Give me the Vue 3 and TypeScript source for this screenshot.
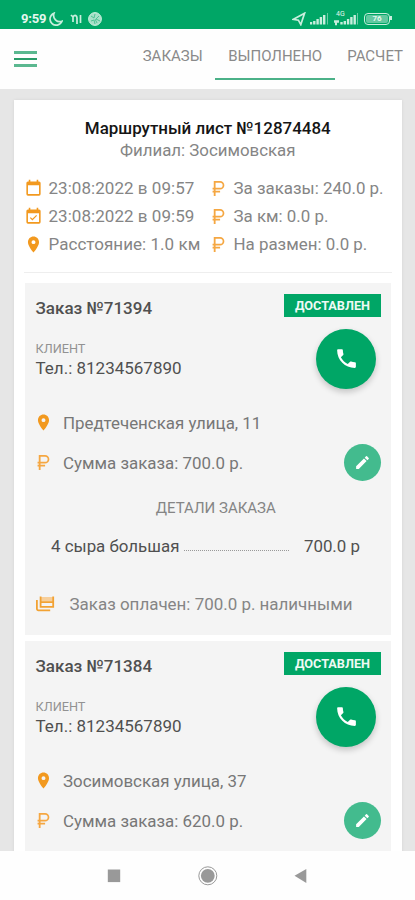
<script setup lang="ts">
interface Order {
  id: number
  phone: string
  address: string
  sum: string
  item?: { name: string; price: string }
  paid?: string
}

const tabs = [
  { key: 'orders', label: 'ЗАКАЗЫ', active: false },
  { key: 'done', label: 'ВЫПОЛНЕНО', active: true },
  { key: 'calc', label: 'РАСЧЕТ', active: false },
]

const summary = [
  { icon: 'calendar', text: '23:08:2022 в 09:57' },
  { icon: 'ruble', text: 'За заказы: 240.0 р.' },
  { icon: 'calendar-check', text: '23:08:2022 в 09:59' },
  { icon: 'ruble', text: 'За км: 0.0 р.' },
  { icon: 'pin', text: 'Расстояние: 1.0 км' },
  { icon: 'ruble', text: 'На размен: 0.0 р.' },
]

const orders: Order[] = [
  {
    id: 71394,
    phone: '81234567890',
    address: 'Предтеченская улица, 11',
    sum: '700.0 р.',
    item: { name: '4 сыра большая', price: '700.0 р' },
    paid: '700.0 р. наличными',
  },
  { id: 71384, phone: '81234567890', address: 'Зосимовская улица, 37', sum: '620.0 р.' },
]

const icons: Record<string, string> = {
  calendar: 'M19 3h-1V1h-2v2H8V1H6v2H5a2 2 0 0 0-2 2v14a2 2 0 0 0 2 2h14a2 2 0 0 0 2-2V5a2 2 0 0 0-2-2zm0 16H5V8h14z',
  'calendar-check':
    'M19 3h-1V1h-2v2H8V1H6v2H5a2 2 0 0 0-2 2v14a2 2 0 0 0 2 2h14a2 2 0 0 0 2-2V5a2 2 0 0 0-2-2zm0 16H5V8h14zM16.5 11.2l-1.1-1.1-4.8 4.8-2.1-2.1-1.1 1.1 3.2 3.2z',
  pin: 'M12 2C8.13 2 5 5.13 5 9c0 5.25 7 13 7 13s7-7.75 7-13c0-3.87-3.13-7-7-7zm0 9.5a2.5 2.5 0 0 1 0-5 2.5 2.5 0 0 1 0 5z',
  ruble: 'M6 2.5h8a5.4 5.4 0 0 1 0 10.8H8.3v1.6H14v2.1H8.3v4.5H6V17H4.5v-2.1H6v-1.6H4.5v-2.1H6zm2.3 2.2v6.5H14a3.25 3.25 0 0 0 0-6.5z',
  phone: 'M6.62 10.79c1.44 2.83 3.76 5.14 6.59 6.59l2.2-2.2c.27-.27.67-.36 1.02-.24 1.12.37 2.33.57 3.57.57.55 0 1 .45 1 1V20c0 .55-.45 1-1 1C10.61 21 3 13.39 3 4c0-.55.45-1 1-1h3.5c.55 0 1 .45 1 1 0 1.25.2 2.45.57 3.57.11.35.03.74-.25 1.02z',
  pencil: 'M3 17.25V21h3.75L17.81 9.94l-3.75-3.75zM20.71 7.04a1 1 0 0 0 0-1.41l-2.34-2.34a1 1 0 0 0-1.41 0l-1.83 1.83 3.75 3.75z',
}
</script>

<template>
  <div class="screen">
    <div class="status">
      <span class="clock">9:59</span>
      <svg class="moon" viewBox="0 0 14 14"><path d="M5 1.2A6.2 6.2 0 1 0 13 9.3 6.3 6.3 0 0 1 5 1.2z" /></svg>
      <svg class="wave" viewBox="0 0 12 12"><path d="M1 2l2 2v5M3 4c2-3 4-1 4 1v6M10.5 2v8" /></svg>
      <svg class="globe" viewBox="0 0 14 14"><circle cx="7" cy="7" r="6.4" /><path d="M3 4l3 2 1-4M11 4L8 7l4 2M3 9l3-1 1 4M7 7l2 4" /></svg>
      <span class="grow"></span>
      <svg class="nav-arrow" viewBox="0 0 14 14"><path d="M1 7.4L12.6 1.2 8.8 12.6 6.4 8.2z" /></svg>
      <svg class="signal" viewBox="0 0 19 14"><path d="M1 12.5v-2.5M4.3 12.5V9M7.6 12.5V7M10.9 12.5V5M14.2 12.5V3" /><path class="dim" d="M17.5 12.5V1" /></svg>
      <span class="cell">
        <span class="net">4G</span>
        <svg class="signal2" viewBox="0 0 24 14"><path d="M0 9.5h5M1 12h2M7.5 12.5V10M10.8 12.5V9M14.1 12.5V7M17.4 12.5V5M20.7 12.5V3" /><path class="dim" d="M23.5 12.5V1" /></svg>
      </span>
      <span class="battery"><span class="level">76</span></span>
    </div>

    <header class="bar">
      <button class="menu" aria-label="Меню"><i></i><i></i><i></i></button>
      <nav class="tabs">
        <a v-for="t in tabs" :key="t.key" :class="['tab', t.key, { active: t.active }]">{{ t.label }}</a>
      </nav>
    </header>

    <main class="content">
      <section class="sheet">
        <h1>Маршрутный лист №12874484</h1>
        <p class="branch">Филиал: Зосимовская</p>
        <div class="summary">
          <div v-for="(s, i) in summary" :key="i" class="fact">
            <svg :class="['ico', s.icon]" viewBox="0 0 24 24"><path :d="icons[s.icon]" /></svg>
            <span>{{ s.text }}</span>
          </div>
        </div>
        <hr />
        <article v-for="o in orders" :key="o.id" class="order">
          <div class="head">
            <h2>Заказ №{{ o.id }}</h2>
            <span class="badge">ДОСТАВЛЕН</span>
          </div>
          <div class="client">
            <div>
              <p class="label">КЛИЕНТ</p>
              <p class="tel">Тел.: {{ o.phone }}</p>
            </div>
            <button class="call" aria-label="Позвонить"><svg viewBox="0 0 24 24"><path :d="icons.phone" /></svg></button>
          </div>
          <div class="line address">
            <svg class="ico pin" viewBox="0 0 24 24"><path :d="icons.pin" /></svg>
            <span>{{ o.address }}</span>
          </div>
          <div class="line sum">
            <svg class="ico ruble" viewBox="0 0 24 24"><path :d="icons.ruble" /></svg>
            <span>Сумма заказа: {{ o.sum }}</span>
            <button class="edit" aria-label="Изменить"><svg viewBox="0 0 24 24"><path :d="icons.pencil" /></svg></button>
          </div>
          <template v-if="o.item">
            <p class="details">ДЕТАЛИ ЗАКАЗА</p>
            <div class="item">
              <span class="name">{{ o.item.name }}</span>
              <span class="dots"></span>
              <span class="price">{{ o.item.price }}</span>
            </div>
            <div class="paid">
              <svg class="cards" viewBox="0 0 19 16">
                <path class="tint" d="M5 1h12v4.5H5z" />
                <path class="stroke" d="M4.6 .5v10.3h12.6V.5M4.6 6.2h12.6M.9 4v8.8a1.5 1.5 0 0 0 1.5 1.5h11.8" />
              </svg>
              <span>Заказ оплачен: {{ o.paid }}</span>
            </div>
          </template>
        </article>
      </section>
    </main>

    <footer class="system">
      <svg viewBox="0 0 415 49">
        <rect x="107.8" y="18.5" width="12.4" height="12.6" />
        <circle class="ring" cx="207.8" cy="24.8" r="9" />
        <circle cx="207.8" cy="24.8" r="6.9" />
        <path d="M306.3 18v14L294.5 24.8z" />
      </svg>
    </footer>
  </div>
</template>

<style>
body {
  margin: 0;
  background: #fff;
  overflow: hidden;
}
</style>

<style scoped>
.screen {
  width: 415px;
  height: 900px;
  display: flex;
  flex-direction: column;
  overflow: hidden;
  background: #fefefe;
  font-family: Roboto, 'Liberation Sans', sans-serif;
  color: #858585;
  white-space: nowrap;
}
h1, h2, p, hr { margin: 0; }
button { border: 0; padding: 0; background: none; }
svg { display: block; flex: none; }

.status {
  height: 29px;
  flex: none;
  box-sizing: border-box;
  padding: 8px 25px 0 21px;
  display: flex;
  align-items: center;
  background: #00a666;
  color: #e4f7ee;
}
.clock { font-size: 13px; font-weight: 700; line-height: 20px; width: 28px; letter-spacing: -0.2px; }
.status svg { fill: none; stroke: #c8eedd; stroke-width: 1.7; }
.moon { width: 14px; height: 14px; }
.wave { width: 12px; height: 12px; margin-left: 7px; }
.globe { width: 14px; height: 14px; margin-left: 6px; }
.status .globe circle { fill: #a8e0c8; stroke: #c8eedd; stroke-width: 1; }
.status .globe path { stroke: #4fc295; stroke-width: 1; }
.grow { flex: 1; }
.nav-arrow { width: 14px; height: 14px; margin-right: 4px; }
.signal { width: 19px; height: 14px; margin-right: 5px; }
.status .signal, .status .signal2 { stroke-width: 2.4; }
.status .dim { stroke: #6ccba6; stroke-width: 1; }
.cell { position: relative; margin-right: 6px; }
.net { position: absolute; left: 2px; top: -1px; font-size: 7px; line-height: 7px; }
.signal2 { width: 24px; height: 14px; }
.battery {
  position: relative;
  width: 26px;
  height: 12px;
  box-sizing: border-box;
  border: 1.5px solid #c8eedd;
  border-radius: 4px;
  padding: 1px;
  display: flex;
}
.battery::after { content: ''; position: absolute; right: -3px; top: 2.5px; width: 2px; height: 4px; background: #c8eedd; }
.level { flex: 1; background: #62c8a0; border-radius: 2px; font-size: 8px; line-height: 8px; font-weight: 700; text-align: center; }

.bar {
  height: 60px;
  flex: none;
  box-sizing: border-box;
  padding: 0 12px 0 14px;
  display: flex;
  justify-content: space-between;
  background: #fefefe;
}
.menu { width: 23px; height: 16px; margin-top: 22px; display: flex; flex-direction: column; justify-content: space-between; }
.menu i { display: block; width: 23px; height: 3px; background: #5bb890; }
.menu i:nth-child(2) { height: 2px; background: #2a9c69; }
.tabs { display: flex; height: 52px; }
.tab { box-sizing: border-box; height: 51px; line-height: 54px; font-size: 15px; text-align: center; color: #8a8a8a; }
.orders { margin-right: 12.5px; }
.done { width: 120px; margin-right: 12px; }
.active { border-bottom: 2.5px solid #4bb188; }

.content { flex: 1; min-height: 0; overflow: hidden; background: #e6e6e6; padding: 11px 13px 0 14px; }
.sheet { height: 900px; background: #fff; padding: 17px 11px 0 10.5px; box-shadow: 0 0 3px rgba(0, 0, 0, 0.08); }
h1 { font-size: 16.95px; line-height: 22px; font-weight: 500; color: #151515; text-align: center; }
.branch { font-size: 16.85px; line-height: 23px; text-align: center; }
.summary { margin-top: 12px; display: grid; grid-template-columns: 185px 1fr; grid-auto-rows: 28.2px; }
.fact { display: flex; align-items: center; font-size: 17px; }
.fact:nth-child(odd) { letter-spacing: 0.04px; }
.fact:nth-child(even) { font-size: 16.9px; }
.fact .ico { margin: 0 6px 0 -1px; }
.ico { width: 19px; height: 19px; fill: #f2991f; }
.ico.ruble { fill: #f5a742; }
hr { border: 0; height: 1px; background: #eee; margin: 13px -1px 10px; }

.order { box-sizing: border-box; height: 352px; margin-bottom: 6px; padding: 11px 10px 0 11px; background: #f4f4f4; }
.head { display: flex; justify-content: space-between; height: 23px; }
h2 { font-size: 17px; line-height: 29px; font-weight: 500; color: #505050; }
.badge { width: 97px; height: 23px; line-height: 24px; text-align: center; background: #00a666; color: #effaf5; font-size: 12.7px; font-weight: 700; }
.client { display: flex; justify-content: space-between; height: 84px; padding: 12px 5px 0 0; box-sizing: border-box; }
.label { margin-top: 11px; font-size: 12.7px; line-height: 18px; color: #929292; }
.tel { font-size: 17px; line-height: 21px; color: #505050; }
.call { width: 60px; height: 60px; border-radius: 50%; background: #00a666; display: flex; align-items: center; justify-content: center; box-shadow: 0 3px 6px rgba(0, 0, 0, 0.2); }
.call svg { width: 25px; height: 25px; fill: #fff; }
.line { display: flex; align-items: center; height: 40px; font-size: 16.9px; color: #777; }
.address { margin-top: 2px; }
.line .ico { margin: 0 10px 0 -1.5px; }
.edit { margin-left: auto; width: 37px; height: 37px; border-radius: 50%; background: #43bb8e; display: flex; align-items: center; justify-content: center; }
.edit svg { width: 17px; height: 17px; fill: #fff; }
.details { margin-top: 13px; font-size: 15px; line-height: 24px; text-align: center; padding-left: 15px; }
.item { margin-top: 14px; display: flex; height: 24px; line-height: 24px; font-size: 16.9px; color: #505050; padding: 0 21px 0 15.5px; }
.dots { flex: 1; margin: 0 15px 7px 5px; border-bottom: 1px dotted #999; }
.paid { margin-top: 34px; display: flex; align-items: center; height: 24px; font-size: 16.95px; }
.cards { width: 19px; height: 16px; margin-right: 15px; fill: none; }
.cards .tint { fill: #f7cf9b; }
.cards .stroke { stroke: #f2a233; stroke-width: 1.8; }

.system { height: 49px; flex: none; background: #fefefe; }
.system svg { width: 415px; height: 49px; fill: #999; }
.system .ring { fill: none; stroke: #999; stroke-width: 1; }
</style>
